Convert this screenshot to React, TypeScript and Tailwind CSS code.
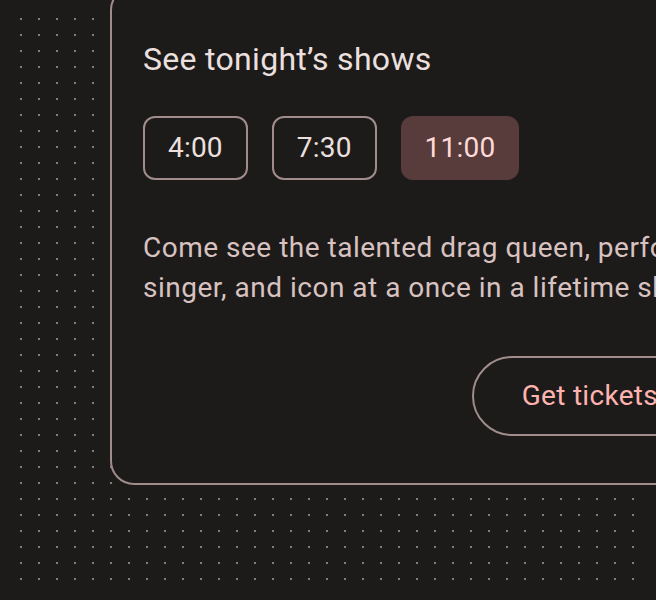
const times = ["4:00", "7:30", "11:00"];

export default function App() {
  const selected = "11:00";

  return (
    <div className="w-[656px] h-[600px] overflow-hidden bg-[#1d1a1a] pt-[18px] pl-[20px] font-['Roboto',sans-serif]">
      <div className="flex flex-col items-start w-[616px] h-[564px] bg-[conic-gradient(from_270deg_at_2px_2px,#8a7877_90deg,transparent_0)] bg-[length:18px_16px]">
        <div className="-mt-[32px] ml-[90px] w-[631px] shrink-0 border-2 border-[#a08c8b] rounded-3xl bg-[#1d1a1a] pt-[47px] pb-[47px] pl-[31px] pr-[31px]">
          <h2 className="text-[32px] leading-[48px] tracking-[0.3px] text-[#ece0df]">See tonight’s shows</h2>

          <div className="mt-[33px] flex gap-6">
            {times.map((t) => (
              <button
                key={t}
                className={
                  t === selected
                    ? "h-16 px-[22px] rounded-xl border-2 border-transparent bg-[#583b3b] text-[#ffdad8] text-[28px] leading-[40px] tracking-[0.2px]"
                    : "h-16 px-[23px] rounded-xl border-2 border-[#a08c8b] text-[#ece0df] text-[28px] leading-[40px] tracking-[0.2px]"
                }
              >
                {t}
              </button>
            ))}
          </div>

          <p className="mt-12 text-[28px] leading-[40px] text-[#d8c2c0] whitespace-nowrap tracking-[0.5px]">
            Come see the talented drag queen, performer,
            <br />
            singer, and icon at a once in a lifetime show.
          </p>

          <div className="mt-12 flex justify-end">
            <button className="h-20 px-12 rounded-full border-2 border-[#a08c8b] text-[#ffb3b0] text-[28px] leading-[40px] tracking-[0.3px]">
              Get tickets
            </button>
          </div>
        </div>
      </div>
    </div>
  );
}
